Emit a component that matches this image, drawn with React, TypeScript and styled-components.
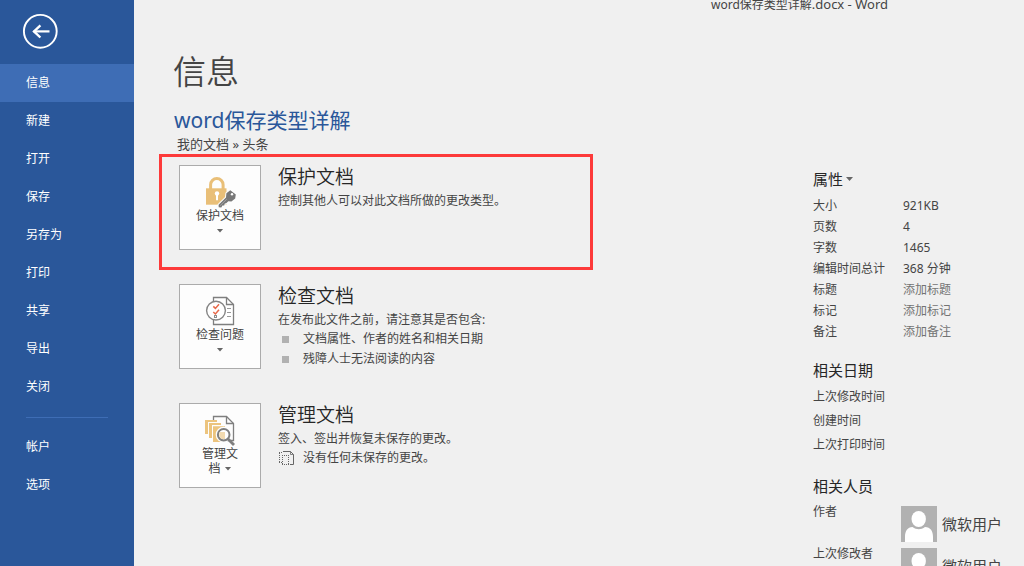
import React from "react";
import styled, { createGlobalStyle } from "styled-components";

const GlobalStyle = createGlobalStyle`
  *, *::before, *::after { box-sizing: border-box; }
  body {
    margin: 0;
    background: #f0f0f0;
    color: #444444;
    font-family: "Noto Sans", "Noto Sans CJK SC", sans-serif;
    font-size: 12px;
    line-height: 20px;
  }
  h1, h2, h3, p, ul { margin: 0; padding: 0; font-weight: 400; }
  ul { list-style: none; }
  button, input { font: inherit; color: inherit; }
`;

const Shell = styled.div`
  display: flex;
  height: 100vh;
  overflow: hidden;
`;

const Sidebar = styled.nav`
  flex: 0 0 134px;
  display: flex;
  flex-direction: column;
  background: #2a579a;
  color: #ffffff;
`;

const BackButton = styled.button`
  display: block;
  width: 36px;
  height: 36px;
  margin: 13px 0 15px 22px;
  padding: 0;
  border: 0;
  background: none;
`;

const NavItem = styled.a<{ $active?: boolean }>`
  display: block;
  padding: 0 26px;
  line-height: 38px;
  color: #ffffff;
  text-decoration: none;
  background: ${(p) => (p.$active ? "#3e6db5" : "transparent")};
`;

const NavDivider = styled.hr`
  width: 82px;
  height: 1px;
  margin: 11px 26px 10px;
  border: 0;
  background: #3e6db5;
`;

const Workspace = styled.div`
  flex: 1;
  min-width: 0;
  display: flex;
  flex-direction: column;
`;

const TitleBar = styled.header`
  flex: none;
  display: flex;
  justify-content: flex-end;
  align-items: flex-end;
  height: 15px;
  padding-right: 136px;
  white-space: pre;
`;

const TitleSuffix = styled.span`
  font-size: 13px;
`;

const Columns = styled.div`
  flex: 1;
  display: flex;
  justify-content: space-between;
  min-height: 0;
`;

const Main = styled.main`
  flex: 1;
  max-width: 460px;
  padding: 33px 0 0 25px;
`;

const PageTitle = styled.h1`
  padding-left: 14px;
  font-size: 33px;
  line-height: 48px;
  font-weight: 350;
`;

const DocTitle = styled.h2`
  padding: 9px 0 0 15px;
  font-size: 21px;
  line-height: 30px;
  color: #2a579a;
`;

const DocPath = styled.p`
  padding: 0 0 1px 18px;
  font-size: 13px;
  line-height: 18px;
`;

const Sections = styled.div`
  display: grid;
  gap: 3px;
  width: 434px;
  max-width: 100%;
`;

const Section = styled.section<{ $framed?: boolean }>`
  display: flex;
  align-items: flex-start;
  gap: 17px;
  min-height: 116px;
  padding: 8px 17px;
  border: 3px solid ${(p) => (p.$framed ? "#fd3a3a" : "transparent")};
`;

const ActionButton = styled.button`
  flex: none;
  display: flex;
  flex-direction: column;
  align-items: center;
  width: 82px;
  height: 85px;
  padding: 10px 0 0;
  border: 1px solid #ababab;
  background: #fdfdfd;
  line-height: 15px;
`;

const ActionLine = styled.span`
  display: flex;
  align-items: center;
  gap: 4px;
  height: 15px;
`;

const Caret = styled.span`
  width: 7px;
  height: 4px;
  background: #666666;
  clip-path: polygon(0 0, 100% 0, 50% 100%);
`;

const SectionTitle = styled.h3`
  margin-bottom: 3px;
  font-size: 19px;
  font-weight: 350;
  line-height: 24px;
  color: #262626;
`;

const SectionText = styled.p`
  line-height: 18px;
`;

const Item = styled.li`
  display: grid;
  grid-template-columns: 25px 1fr;
  align-items: center;
`;

const Bullet = styled.span`
  width: 7px;
  height: 7px;
  margin-left: 4px;
  background: #b1b1b1;
`;

const Properties = styled.aside`
  flex: 0 0 211px;
  padding-top: 152px;
`;

const GroupTitle = styled.h3`
  display: flex;
  align-items: center;
  gap: 3px;
  font-size: 15px;
  line-height: 24px;
  color: #262626;
`;

const Group = styled.div<{ $top: number; $bottom: number }>`
  padding: ${(p) => p.$top}px 0 ${(p) => p.$bottom}px;
`;

const PropertyRow = styled.div<{ $height: number }>`
  display: grid;
  grid-template-columns: 90px 1fr;
  line-height: ${(p) => p.$height}px;
`;

const PropertyInput = styled.input`
  width: 100%;
  height: 21px;
  padding: 0;
  border: 0;
  background: none;
  &::placeholder { color: #737373; opacity: 1; }
`;

const PersonRow = styled.div`
  display: grid;
  grid-template-columns: 88px 36px 1fr;
  height: 42px;
  line-height: 12px;
`;

const PersonName = styled.span`
  padding-left: 5px;
  font-size: 15px;
  line-height: 36px;
`;

const BackIcon = () => (
  <svg width="36" height="36" viewBox="0 0 36 36" fill="none" stroke="#fff" aria-hidden="true">
    <circle cx="18.3" cy="18.3" r="16.4" strokeWidth="1.9" />
    <path d="M11.5 18.4H27.5" strokeWidth="2.2" />
    <path d="M18.4 12.3L12 18.4L18.4 24.5" strokeWidth="2.4" />
  </svg>
);

const ProtectIcon = () => (
  <svg width="32" height="32" viewBox="0 0 32 32" fill="none" aria-hidden="true">
    <path d="M6.6 13V8.8a6.2 6.2 0 0 1 12.5 0V13" stroke="#e9bf78" strokeWidth="3" />
    <rect x="2" y="12.3" width="20.5" height="16.4" fill="#e9bf78" />
    <circle cx="13" cy="17.4" r="2.2" fill="#fff" />
    <path d="M13 18v6.3" stroke="#fff" strokeWidth="2" />
    <path
      d="M22.4 17.2L26.3 14.2L31.8 18.6L31.2 22.4L27.4 25.5L24.3 25.3L22.2 27.2L20.8 27.4L20.2 29.4L18.4 29.6L17.3 31.5L14.7 31.3L14.6 28.7L22 21.4Z"
      fill="#fdfdfd"
      stroke="#fdfdfd"
      strokeWidth="2"
      strokeLinejoin="round"
    />
    <path d="M22.4 17.2L26.3 14.2L31.8 18.6L31.2 22.4L27.4 25.5L24.3 25.3L22.2 27.2L20.8 27.4L20.2 29.4L18.4 29.6L17.3 31.5L14.7 31.3L14.6 28.7L22 21.4Z" fill="#777" />
    <circle cx="28" cy="18.3" r="1.2" fill="#fff" />
    <path d="M16.2 29.6l6.6-6.5" stroke="#b8b8b8" strokeWidth="0.7" />
  </svg>
);

const InspectIcon = () => (
  <svg width="32" height="32" viewBox="0 0 32 32" fill="none" aria-hidden="true">
    <path d="M9.5 2.5H22.5L29.5 9.5V29.5H9.5Z" fill="#fff" stroke="#7f7f7f" strokeWidth="1.3" />
    <path d="M22.5 2.5V9.5H29.5" stroke="#7f7f7f" strokeWidth="1.3" />
    <path d="M23 13.5h4M23 17.5h4M23 21.5h4" stroke="#999" />
    <circle cx="12" cy="15.6" r="9.4" fill="#fff" stroke="#858585" strokeWidth="1.4" />
    <path d="M9.3 11.4L11.4 13.4L15 9.2M9.3 17L11.4 19L15 14.8" stroke="#e8694a" strokeWidth="1.5" />
    <rect x="10.5" y="20.5" width="2" height="2" stroke="#8c8c8c" />
  </svg>
);

const ManageIcon = () => (
  <svg width="32" height="32" viewBox="0 0 32 32" fill="none" aria-hidden="true">
    <path d="M9.5 6V2.5H22.5L29.5 9.5V26.5H22" stroke="#7f7f7f" strokeWidth="1.3" />
    <path d="M22.5 2.5V9.5H29.5" stroke="#7f7f7f" strokeWidth="1.3" />
    <path d="M1 6H13V8H4V20H1Z M5 9H17V11H8V24H5Z M9 12.3H21V28H9Z" fill="#ecc47e" />
    <circle cx="19.7" cy="20.7" r="8" fill="#fdfdfd" />
    <circle cx="19.7" cy="20.7" r="5.8" fill="#fff" stroke="#7f7f7f" strokeWidth="2" />
    <path d="M16 18H21V25H17.5A5 5 0 0 1 16 18Z" fill="#f2dab0" />
    <path d="M24 25L30 31" stroke="#7f7f7f" strokeWidth="2.8" />
  </svg>
);

const DraftIcon = () => (
  <svg width="16" height="16" viewBox="0 0 16 16" fill="none" stroke="#666" aria-hidden="true">
    <path d="M5 1.5H12.5L15.5 4.5V14.5H12" />
    <path d="M12.5 1.5V4.5H15.5" strokeWidth="0.8" />
    <path d="M1 2.5H5M1 12.5H4M1.5 3V12" strokeDasharray="1 1" />
    <path d="M4 5.5H11M4 14.5H11M4.5 5V14M10.5 5V14" strokeDasharray="1 1" />
  </svg>
);

const Avatar = () => (
  <svg width="36" height="36" viewBox="0 0 36 36" aria-hidden="true">
    <rect width="36" height="36" fill="#b1b1b1" />
    <ellipse cx="17.7" cy="13" rx="7.2" ry="8" fill="#fff" />
    <path d="M4 36V31C4 25 6.5 21.2 11.5 21C15.5 24 20 24 24 21C29.5 21.2 32 25 32 31V36Z" fill="#fff" />
  </svg>
);

const navItems = ["信息", "新建", "打开", "保存", "另存为", "打印", "共享", "导出", "关闭"];
const facts = [
  ["大小", "921KB"],
  ["页数", "4"],
  ["字数", "1465"],
  ["编辑时间总计", "368 分钟"],
];
const editable = [
  ["标题", "添加标题"],
  ["标记", "添加标记"],
  ["备注", "添加备注"],
];

export default function App() {
  return (
    <>
      <GlobalStyle />
      <Shell>
        <Sidebar>
          <BackButton aria-label="返回"><BackIcon /></BackButton>
          {navItems.map((name, i) => (
            <NavItem key={name} href="#" $active={i === 0}>{name}</NavItem>
          ))}
          <NavDivider />
          <NavItem href="#">帐户</NavItem>
          <NavItem href="#">选项</NavItem>
        </Sidebar>
        <Workspace>
          <TitleBar>
            <span>word保存类型详解<TitleSuffix>.docx - Word</TitleSuffix></span>
          </TitleBar>
          <Columns>
            <Main>
              <PageTitle>信息</PageTitle>
              <DocTitle>word保存类型详解</DocTitle>
              <DocPath>我的文档 » 头条</DocPath>
              <Sections>
                <Section $framed>
                  <ActionButton>
                    <ProtectIcon />
                    <ActionLine>保护文档</ActionLine>
                    <ActionLine><Caret /></ActionLine>
                  </ActionButton>
                  <div>
                    <SectionTitle>保护文档</SectionTitle>
                    <SectionText>控制其他人可以对此文档所做的更改类型。</SectionText>
                  </div>
                </Section>
                <Section>
                  <ActionButton>
                    <InspectIcon />
                    <ActionLine>检查问题</ActionLine>
                    <ActionLine><Caret /></ActionLine>
                  </ActionButton>
                  <div>
                    <SectionTitle>检查文档</SectionTitle>
                    <SectionText>在发布此文件之前，请注意其是否包含:</SectionText>
                    <ul>
                      <Item><Bullet />文档属性、作者的姓名和相关日期</Item>
                      <Item><Bullet />残障人士无法阅读的内容</Item>
                    </ul>
                  </div>
                </Section>
                <Section>
                  <ActionButton>
                    <ManageIcon />
                    <ActionLine>管理文</ActionLine>
                    <ActionLine>档<Caret /></ActionLine>
                  </ActionButton>
                  <div>
                    <SectionTitle>管理文档</SectionTitle>
                    <SectionText>签入、签出并恢复未保存的更改。</SectionText>
                    <ul>
                      <Item><DraftIcon />没有任何未保存的更改。</Item>
                    </ul>
                  </div>
                </Section>
              </Sections>
            </Main>
            <Properties>
              <GroupTitle>属性<Caret /></GroupTitle>
              <Group $top={4} $bottom={16}>
                {facts.map(([label, value]) => (
                  <PropertyRow key={label} $height={21}>
                    <span>{label}</span>
                    <span>{value}</span>
                  </PropertyRow>
                ))}
                {editable.map(([label, hint]) => (
                  <PropertyRow key={label} $height={21}>
                    <label htmlFor={hint}>{label}</label>
                    <PropertyInput id={hint} placeholder={hint} />
                  </PropertyRow>
                ))}
              </Group>
              <GroupTitle>相关日期</GroupTitle>
              <Group $top={3} $bottom={17}>
                {["上次修改时间", "创建时间", "上次打印时间"].map((label) => (
                  <PropertyRow key={label} $height={24}><span>{label}</span></PropertyRow>
                ))}
              </Group>
              <GroupTitle>相关人员</GroupTitle>
              <Group $top={8} $bottom={0}>
                {["作者", "上次修改者"].map((label) => (
                  <PersonRow key={label}>
                    <span>{label}</span>
                    <Avatar />
                    <PersonName>微软用户</PersonName>
                  </PersonRow>
                ))}
              </Group>
            </Properties>
          </Columns>
        </Workspace>
      </Shell>
    </>
  );
}
